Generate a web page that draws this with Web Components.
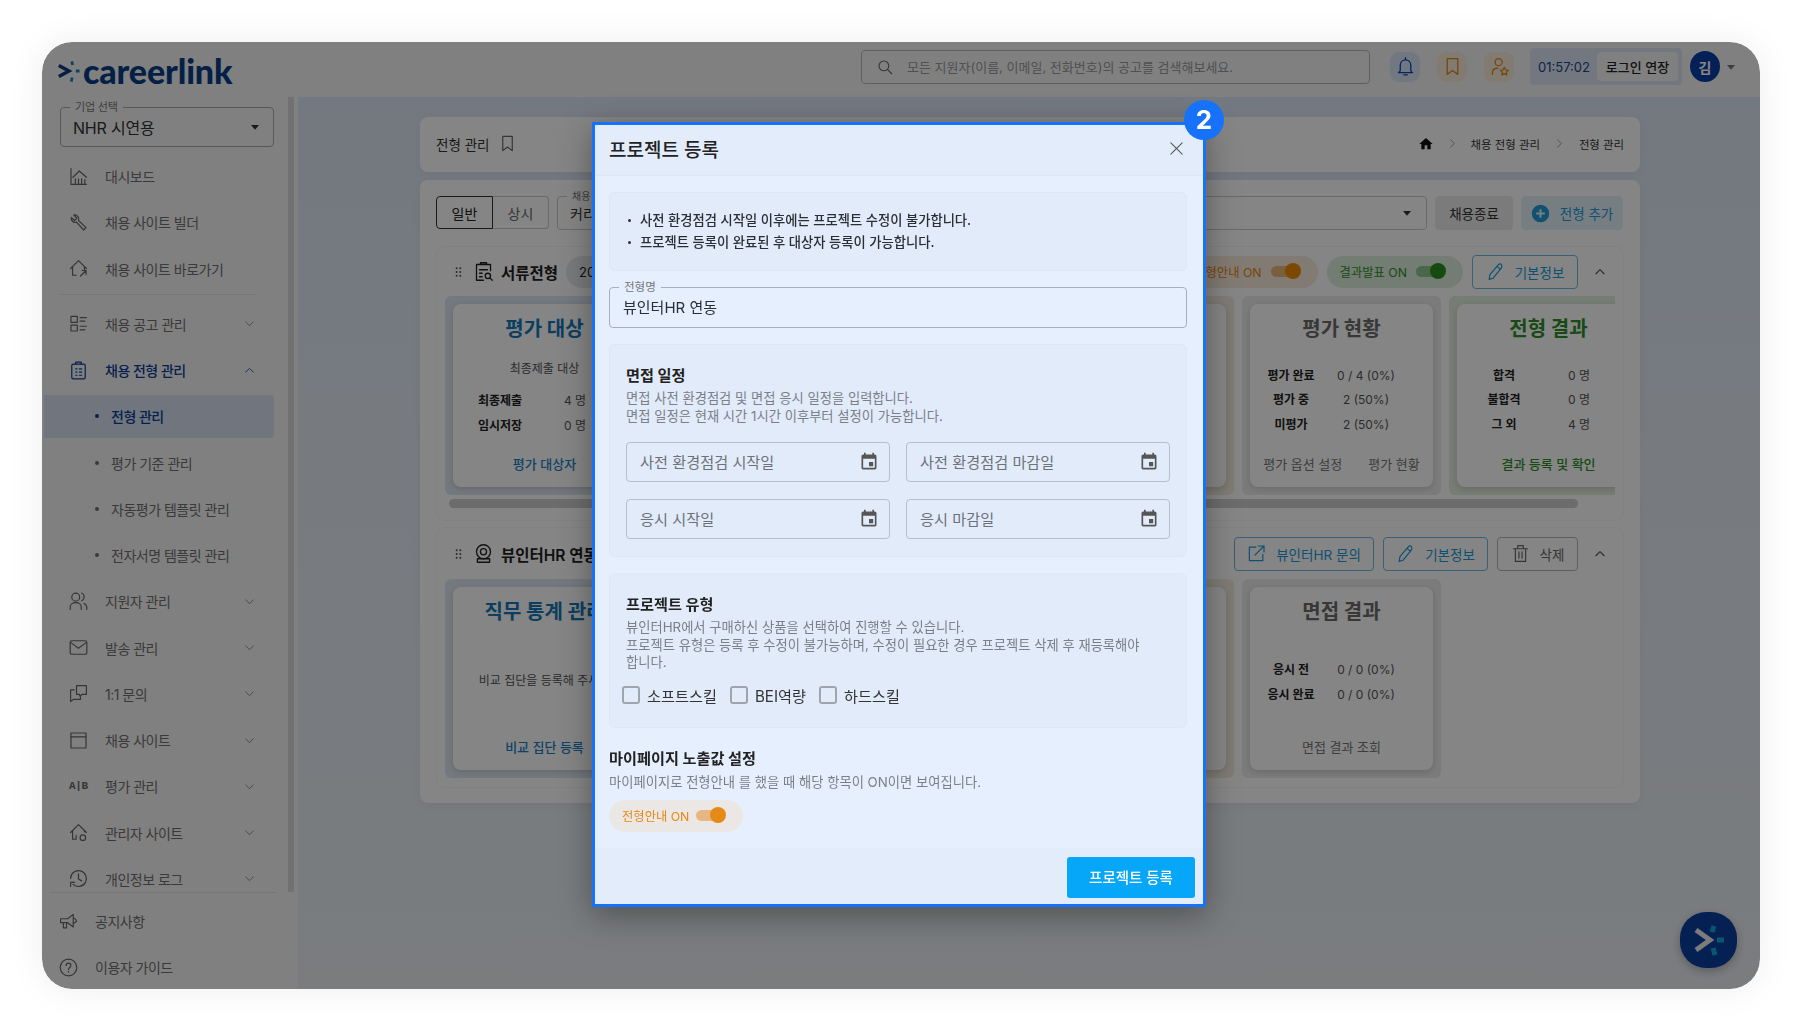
<!DOCTYPE html>
<html lang="ko"><head><meta charset="utf-8"><title>프로젝트 등록</title>
<style>
html,body{margin:0;height:100%;background:#fff}
body{font-family:Inter,"Noto Sans CJK KR",sans-serif;color:#222;overflow:hidden}
</style></head><body>
<app-frame>
  <top-bar slot="top"></top-bar>
  <side-bar slot="side"></side-bar>
  <main-area slot="main"></main-area>
  <project-dialog slot="dialog"></project-dialog>
</app-frame>
<script>
const ICONS={
 dash:'<path d="M2.500 2v20h19.500M8 21v-6M12 21v-6M16 21v-6M20 21v-5M5 13l8-8 9 8"/>',
 wrench:'<path d="M6 2.500 10 6.500 7 9.500 3 5.500C2 9 5.500 13 9.500 11.500l9 10 3-3-9.500-9C13.500 5.500 10 1.500 6 2.500z"/>',
 homego:'<path d="M2 12 12 2l10 10M4.500 10v10.500H9M19.500 10v3M14.500 21.500l7-7M16.500 14.500h5v5"/>',
 list:'<rect x="2.500" y="3" width="8" height="7.500"/><rect x="2.500" y="14" width="8" height="7.500"/><path d="M14 4.500h8M14 9h6M14 15.500h8M14 20h6"/>',
 clip:'<rect x="3.500" y="4" width="17" height="18.500" rx="2"/><path d="M8.500 4V1.500h7V4M8.500 10h1.500M13 10h3M8.500 14h1.500M13 14h3M8.500 18h1.500M13 18h3"/>',
 people:'<circle cx="8.500" cy="6.500" r="5"/><path d="M1.500 22v-3c0-3 3-5.500 7-5.500s7 2.500 7 5.500v3M16 1.500c2.500 1 3.500 3 3 5.500s-2 3.500-3 4M19 14.500c2 1 3.500 3 3.500 5v2.500"/>',
 mail:'<rect x="1.500" y="3.500" width="21" height="17" rx="2"/><path d="m2 5.500 10 7.500 10-7.500"/>',
 chat:'<path d="M9.500 2H22v11h-5.500L14 15.500l-1-2.500H9.500zM6.500 7.500H2V22l3.500-2.500h9v-3"/>',
 win:'<rect x="2.500" y="2.500" width="19" height="19"/><path d="M2.500 7.500h19"/>',
 homecog:'<path d="M2 12 12 2l10 10M4.500 10v10.500H9v-5M19.500 10v1"/><circle cx="17.500" cy="18.500" r="3.500"/>',
 hist:'<path d="M2 12a10 10 0 1 1 3.200 7.400M2 22v-5h5M12 6v6.500l4 2.500"/>',
 mega:'<path d="M2 8.500h9l7-5.500v16l-7-5.500H2zM5.500 14v6h4v-6M18 7.500c2.500 1 4 2.300 4 3.500s-1.500 2.500-4 3.500"/>',
 help:'<circle cx="12" cy="12" r="10.500"/><path d="M9 9.500C9 7.500 10.500 6.500 12 6.500s3 1 3 3c0 2.500-3 2.500-3 5M12 17v1"/>',
 bell:'<path d="M6 17V10.500C6 7 8.500 4.500 12 4.500s6 2.500 6 6V17l2 2H4zM10 21.500h4M12 2v2"/>',
 mark:'<path d="M6 3h12v18l-6-4.500L6 21z"/>',
 userstar:'<circle cx="11" cy="7" r="4"/><path d="M4 21v-2c0-3 2-5 6-5"/><path d="m17.500 13 1.400 2.800 3.100.4-2.200 2.200.5 3.100-2.800-1.400-2.800 1.400.5-3.100-2.200-2.200 3.100-.4z"/>',
 search:'<circle cx="10.500" cy="10.500" r="6.500"/><path d="m15.500 15.500 5.500 5.500"/>',
 down:'<path d="m5 9 7 7 7-7"/>',
 up:'<path d="m5 15 7-7 7 7"/>',
 right:'<path d="m8 4 8 8-8 8"/>',
 x:'<path d="M4 4l16 16M20 4 4 20"/>',
 pencil:'<path d="M15.500 3.500c1-1.500 3-1.500 4 0s1 2.500 0 4L9 20.500l-5 1.500L5 16zM14 5.500l4 3.500"/>',
 ext:'<path d="M11 4H3v17h17v-8M14 2.500h7.500V10M21.500 2.500 10 14"/>',
 trash:'<path d="M3 6h18M5.500 6v16h13V6M8.500 6V2h7v4M10 10v8M14 10v8"/>',
 doc:'<path d="M8.500 4H4v18h8M15.500 4H20v7M8.500 4V2h7v2zM7.500 10h9M7.500 14h3M7.500 18h3"/><circle cx="17" cy="17" r="3"/><path d="m19 19 3 3"/>',
 cam:'<circle cx="12" cy="10" r="8"/><circle cx="12" cy="10" r="3.500"/><path d="M5 22h14v-4H5z"/>'
};
const FILLS={
 event:'<path d="M17 12h-5v5h5v-5zM16 1v2H8V1H6v2H5c-1.110 0-1.990.9-1.990 2L3 19c0 1.100.89 2 2 2h14c1.100 0 2-.9 2-2V5c0-1.100-.9-2-2-2h-1V1h-2zm3 18H5V8h14v11z"/>',
 home:'<path d="M10 20v-6h4v6h5v-8h3L12 3 2 12h3v8z"/>',
 caret:'<path d="M6 9h12l-6 7z"/>',
 plus:'<path d="M12 1a11 11 0 1 0 0 22 11 11 0 0 0 0-22zm1.300 5.500v4.200h4.200v2.600h-4.200v4.200h-2.600v-4.200H6.500v-2.600h4.200V6.500z"/>',
 dots:'<circle cx="8" cy="4" r="2.200"/><circle cx="16" cy="4" r="2.200"/><circle cx="8" cy="12" r="2.200"/><circle cx="16" cy="12" r="2.200"/><circle cx="8" cy="20" r="2.200"/><circle cx="16" cy="20" r="2.200"/>'
};
function def(name,css,html){
 customElements.define(name,class extends HTMLElement{
  connectedCallback(){
   if(this.shadowRoot)return;
   const r=this.attachShadow({mode:'open'});
   const a=n=>this.getAttribute(n)||'';
   r.innerHTML='<style>'+css+'</style>'+(typeof html==='function'?html(a):html);
  }
 });
}
def('x-icon',':host{display:inline-flex;width:var(--s,18px);height:var(--s,18px);flex:none}svg{width:100%;height:100%;display:block}',
 a=>{const n=a('name');const f=FILLS[n];return `<svg viewBox="0 0 24 24" fill="${f?'currentColor':'none'}" stroke="${f?'none':'currentColor'}" stroke-width="${a('w')||1.5}" stroke-linecap="round" stroke-linejoin="round">${f||ICONS[n]}</svg>`});
def('x-logo',':host{display:inline-flex;align-items:center;gap:3px;color:#0b3f86;margin-top:8px}svg{width:23px;height:26px;display:block}span{font:900 34px/1 Lato,Inter,sans-serif;letter-spacing:-.15px}',
 `<svg viewBox="0 0 25 26"><path d="M2 7 13 13 2 19" fill="none" stroke="#0b3f86" stroke-width="3.800"/><path d="M16 2.500l1 4M20.500 13h4M16.500 20l-1 4.500" stroke="#0d86b8" stroke-width="3"/></svg><span>careerlink</span>`);
def('top-bar',`:host{display:flex;align-items:center;height:55px;background:#f6f6f6;padding:0 0 6px 15px;box-sizing:border-box}
 .sp{flex:1}.search{width:509px;height:34px;box-sizing:border-box;border:1px solid #b6b6b6;border-radius:4px;display:flex;align-items:center;gap:13px;padding-left:14px;color:#999;font-size:13px;margin-right:20px;--s:18px}
 .search x-icon{color:#666}
 .ib{width:30px;height:30px;border-radius:9px;display:grid;place-items:center;margin-right:17px;--s:21px}
 .ib.b{background:#dbe6f7;color:#0c47b8}.ib.o{background:#f8ebd9;color:#dd8a1e}
 .timer{width:152px;height:37px;background:#dce6f5;border-radius:4px;display:flex;align-items:center;box-sizing:border-box;padding:0 4px 0 8px;justify-content:space-between;margin-left:-1px;font-size:13px;color:#17458c}
 .timer b{font-weight:500;background:#f6f6f6;color:#222;width:81px;height:29px;border-radius:4px;display:grid;place-items:center;font-size:13px}
 .av{width:30px;height:31px;border-radius:50%;background:#0a3fa8;color:#fff;display:grid;place-items:center;font-size:14px;font-weight:600;margin-left:8px}
 .ca{color:#777;--s:16px;margin:0 21px 0 3px}`,
 `<x-logo></x-logo><div class="sp"></div>
 <div class="search"><x-icon name="search"></x-icon><span>모든 지원자(이름, 이메일, 전화번호)의 공고를 검색해보세요.</span></div>
 <div class="ib b"><x-icon name="bell"></x-icon></div><div class="ib o"><x-icon name="mark"></x-icon></div><div class="ib o"><x-icon name="userstar"></x-icon></div>
 <div class="timer"><span>01:57:02</span><b>로그인 연장</b></div><div class="av">김</div><x-icon class="ca" name="caret"></x-icon>`);
def('nav-row',`:host{display:flex;align-items:center;height:46.250px;width:231.500px;box-sizing:border-box;font-size:14px;letter-spacing:-.5px;color:#707070;position:relative;flex:none}
 .ic{width:63px;padding-left:27px;box-sizing:border-box;display:flex;--s:19px;color:#666;flex:none}
 .t{flex:1;white-space:nowrap}
 .ch{--s:13px;margin-right:18px;color:#777}
 .ab{font:700 11px/19px "Liberation Mono",monospace;letter-spacing:-.4px}
 :host([active]){color:#0d3f96;font-weight:500}:host([active]) .ic,:host([active]) .ch{color:#0d3f96}
 :host([sub]){padding-left:53px}:host([sub]) .t{padding-left:16px;position:relative}
 :host([sub]) .t::before{content:"";position:absolute;left:0;top:8px;width:4px;height:4px;border-radius:50%;background:currentColor}
 :host([foot]) .ic{padding-left:17px;width:53px}
 :host([sel]){color:#0d3f96;font-weight:500}
 :host([sel])::before{content:"";position:absolute;left:2px;right:0;top:2px;bottom:2px;background:#d7e1f1;border-radius:0 4px 4px 0;z-index:-1}`,
 a=>{const ic=a('icon');
  return `${ic?`<div class="ic">${ic==='ab'?'<span class="ab">A|B</span>':`<x-icon name="${ic}"></x-icon>`}</div>`:''}<div class="t"><slot></slot></div>${a('chev')?`<x-icon class="ch" name="${a('chev')}"></x-icon>`:''}`});
def('side-bar',`:host{display:flex;flex-direction:column;width:256px;height:100%;background:#f6f6f6;position:relative;isolation:isolate}
 .scroll{flex:1;min-height:0;overflow:hidden;padding-top:10px;position:relative}
 .bar{position:absolute;left:246px;top:0;bottom:0;width:6px;background:#d8d8d8}
 .sel{margin:0 0 6px 18px;width:214px;height:40px;box-sizing:border-box;border:1px solid #a9a9a9;border-radius:4px;display:flex;align-items:center;justify-content:space-between;padding:0 10px 0 12px;font-size:16px;letter-spacing:-.2px;color:#333;position:relative;--s:16px}
 .sel i{position:absolute;left:9px;top:-8px;font:normal 11px/14px Inter,"Noto Sans CJK KR",sans-serif;color:#777;background:#f6f6f6;padding:0 5px}
 hr{margin:2px 0 6px 18px;width:196px;border:0;border-top:1px solid #e4e4e4}
 .foot{height:97px;box-sizing:border-box;margin:0;padding-top:6px;position:relative}
 .foot::before{content:"";position:absolute;left:8px;right:22px;top:0;border-top:1px solid #e2e2e2}`,
 `<div class="scroll"><div class="bar"></div>
 <div class="sel"><i>기업 선택</i><span>NHR 시연용</span><x-icon name="caret"></x-icon></div>
 <nav-row icon="dash">대시보드</nav-row><nav-row icon="wrench">채용 사이트 빌더</nav-row><nav-row icon="homego">채용 사이트 바로가기</nav-row><hr>
 <nav-row icon="list" chev="down">채용 공고 관리</nav-row><nav-row icon="clip" chev="up" active>채용 전형 관리</nav-row>
 <nav-row sub sel>전형 관리</nav-row><nav-row sub>평가 기준 관리</nav-row><nav-row sub>자동평가 템플릿 관리</nav-row><nav-row sub>전자서명 템플릿 관리</nav-row>
 <nav-row icon="people" chev="down">지원자 관리</nav-row><nav-row icon="mail" chev="down">발송 관리</nav-row><nav-row icon="chat" chev="down">1:1 문의</nav-row><nav-row icon="win" chev="down">채용 사이트</nav-row><nav-row icon="ab" chev="down">평가 관리</nav-row><nav-row icon="homecog" chev="down">관리자 사이트</nav-row><nav-row icon="hist" chev="down">개인정보 로그</nav-row></div>
 <div class="foot"><nav-row icon="mega" foot>공지사항</nav-row><nav-row icon="help" foot>이용자 가이드</nav-row></div>`);
def('x-switch',`:host{display:inline-flex;align-items:center;border-radius:16px;height:32px;box-sizing:border-box;font-size:12.300px;white-space:nowrap;padding:0 var(--pr,18px) 0 13px;gap:9px;color:var(--c);background:var(--bg)}
 .tr{width:29px;height:11px;border-radius:6px;background:var(--tr);position:relative;flex:none}
 .tr::after{content:"";position:absolute;right:-1px;top:-3px;width:16px;height:16px;border-radius:50%;background:var(--k)}`,
 `<slot></slot><span class="tr"></span>`);
def('x-btn',`:host{display:inline-flex;align-items:center;justify-content:center;gap:10px;box-sizing:border-box;height:var(--h,34px);border:1px solid var(--bc,#6db9e2);border-radius:4px;color:var(--c,#1a9ad8);background:var(--b,transparent);font-size:13.500px;white-space:nowrap;--s:19px}`,
 a=>`${a('icon')?`<x-icon name="${a('icon')}"></x-icon>`:''}<slot></slot>`);
def('stat-row',`:host{display:grid;grid-template-columns:75px 75px;font-size:12px;height:24.500px;line-height:24.500px;text-align:center;color:#555}b{font-weight:700;color:#222}`,
 a=>`<b>${a('k')}</b><span>${a('v')}</span>`);
def('stat-panel',`:host{display:block;flex:none;width:var(--w,199px);height:199px;box-sizing:border-box;padding:8px;background:var(--p);border-radius:6px}
 .card{background:#fff;height:183px;border-radius:8px;box-shadow:0 2px 6px rgba(0,0,0,.14);display:flex;flex-direction:column}
 h3{margin:0;font-size:20px;font-weight:700;text-align:center;color:var(--t);line-height:32px;padding-top:9px;height:32px;white-space:nowrap;overflow:visible}
 .body{flex:1;margin-top:11px;display:flex;flex-direction:column;justify-content:center;padding-left:var(--shift,3.500px);padding-top:var(--bp,0);min-height:0}
 .foot{height:44px;display:flex;justify-content:center;gap:var(--fg,0);align-items:center;font-size:13px;color:var(--l);font-weight:var(--lw,500);padding-bottom:3px;box-sizing:border-box}`,
 a=>`<div class="card">${a('title')?`<h3>${a('title')}</h3>`:'<h3></h3>'}<div class="body"><slot></slot></div><div class="foot"><slot name="foot"></slot></div></div>`);
def('flow-section',`:host{display:block;background:#fff;border-radius:8px;box-shadow:0 0 0 1px #f6f7f9;padding:0 8px 9px;box-sizing:border-box}
 .hd{height:var(--hh,49px);display:flex;align-items:center;padding:0 0 0 8px;gap:0}
 .dots{--s:11px;color:#555;margin-right:9px;height:16px}
 .ic{--s:21px;color:#222;margin-right:7px}
 .tt{font-size:15.500px;font-weight:600;white-space:nowrap;color:#222}
 .sp{flex:1}
 ::slotted([slot=right]){display:flex;align-items:center;gap:9px}
 .col{--s:14px;color:#555;margin:0 8px 0 15px}`,
 a=>`<div class="hd"><x-icon class="dots" name="dots"></x-icon><x-icon class="ic" name="${a('icon')}"></x-icon><span class="tt">${a('title')}</span><slot name="chip"></slot><span class="sp"></span><slot name="right"></slot><x-icon class="col" name="up" w="2"></x-icon></div><slot></slot>`);
def('main-area',`:host{display:block;height:100%;position:relative;background:linear-gradient(180deg,#dde8f6 0,#e4ebf5 300px,#eaedf2 100%);padding:20px 120px 0 122px;box-sizing:border-box;overflow:hidden}
 .crumb{height:55px;background:#fff;border-radius:8px;display:flex;align-items:center;padding:0 16px 2px;box-sizing:border-box;font-size:13.500px;color:#333;box-shadow:0 2px 8px rgba(90,110,140,.08)}
 .crumb .bm{--s:19px;margin-left:9px;color:#666}.sp{flex:1}
 .cr{font-size:11.400px;display:flex;align-items:center;color:#333}.cr x-icon.h{--s:16px;color:#111}.cr x-icon.g{--s:11px;color:#777;margin:0 13px}
 .box{margin-top:8px;height:623px;background:#fff;border-radius:8px;padding:16px 17px 16px 16px;box-sizing:border-box;box-shadow:0 2px 8px rgba(90,110,140,.08)}
 .tools{display:flex;height:34px;margin-bottom:17px;align-items:stretch}
 .tabs{display:flex;width:113px;height:33px;font-size:14px;color:#666;margin-right:8px}
 .tabs span{flex:1;display:grid;place-items:center;border:1px solid #c9c9c9}
 .tabs .on{border-color:#333;color:#222;border-radius:4px 0 0 4px}.tabs .off{border-left:0;border-radius:0 4px 4px 0}
 .sel{flex:1;border:1px solid #c9c9c9;border-radius:4px;position:relative;display:flex;align-items:center;justify-content:space-between;padding:0 11px 0 12px;font-size:14px;--s:16px;color:#333;margin-right:8px}
 .sel i{position:absolute;left:9px;top:-7px;font:normal 10px/12px Inter,"Noto Sans CJK KR",sans-serif;color:#777;background:#fff;padding:0 5px}
 .sec{margin:0 0 8px 1px}
 .sec2{--hh:51px}
 .strip{display:flex;gap:8px;overflow:hidden;height:199px}
 .track{height:9px;margin:4px 37px 3px 4px;background:#cfcfcf;border-radius:5px}
 .chip{margin-left:8px;background:#e9eaec;border-radius:16px;height:32px;line-height:32px;padding:0 13px;font-size:13px;white-space:nowrap}
 .blue{--p:#dfe8f3;--t:#1877b8;--l:#1e80c4}.gray{--p:#ececec;--t:#6c6c6c;--l:#787878;--lw:400}.green{--p:#e3efdf;--t:#2f8f2a;--l:#2f8f2a}.orange{--p:#f3ecdf;--t:#d9861a;--l:#d9861a}
 .sub{font-size:12px;text-align:center;color:#555;line-height:25px;margin-left:-9.500px;padding-bottom:8px}
 .msg{font-size:12px;color:#555;text-align:center;margin-left:-3.500px;white-space:nowrap;padding-bottom:6px}
 .fab{position:absolute;left:1382px;top:815px;width:57px;height:56px;border-radius:46%;background:#0a3f9e;box-shadow:0 3px 8px rgba(0,0,0,.25);display:grid;place-items:center}
 .fab svg{width:40px;height:40px}
 .orangeSw{--c:#e8870f;--bg:#f7ebdc;--tr:#eab67a;--k:#ee8a05}.greenSw{--c:#2f8f2a;--bg:#dff0dc;--tr:#8fc58c;--k:#2c8f22}
 .c0{--bc:#b5b5b5;--c:#666}`,
 `<div class="crumb"><span>전형 관리</span><x-icon class="bm" name="mark"></x-icon><span class="sp"></span>
  <div class="cr"><x-icon class="h" name="home"></x-icon><x-icon class="g" name="right"></x-icon><span>채용 전형 관리</span><x-icon class="g" name="right" style="margin:0 14px"></x-icon><span>전형 관리</span></div></div>
 <div class="box">
  <div class="tools"><div class="tabs"><span class="on">일반</span><span class="off">상시</span></div>
   <div class="sel"><i>채용</i><span>커리어</span><x-icon name="caret"></x-icon></div>
   <x-btn style="--bc:#ececec;--b:#ececec;--c:#333;width:78px;margin-right:8px">채용종료</x-btn>
   <x-btn icon="plus" style="--bc:#e3f1f9;--b:#e3f1f9;--c:#1f9ad9;width:102px">전형 추가</x-btn></div>
  <flow-section class="sec" icon="doc" title="서류전형" style="height:273px">
   <span class="chip" slot="chip">2025</span>
   <div slot="right"><x-switch class="orangeSw">전형안내 ON</x-switch><x-switch class="greenSw">결과발표 ON</x-switch><x-btn icon="pencil" style="width:106px">기본정보</x-btn></div>
   <div class="strip">
    <stat-panel class="blue" title="평가 대상" style="--shift:9.500px"><div class="sub">최종제출 대상</div><stat-row k="최종제출" v="4 명"></stat-row><stat-row k="임시저장" v="0 명" style="margin-bottom:5px"></stat-row><span slot="foot">평가 대상자</span></stat-panel>
    <stat-panel class="gray"></stat-panel><stat-panel class="gray"></stat-panel>
    <stat-panel class="orange" style="--w:168px"></stat-panel>
    <stat-panel class="gray" title="평가 현황" style="--fg:26px;--bp:2px"><stat-row k="평가 완료" v="0 / 4 (0%)"></stat-row><stat-row k="평가 중" v="2 (50%)"></stat-row><stat-row k="미평가" v="2 (50%)"></stat-row><span slot="foot">평가 옵션 설정</span><span slot="foot">평가 현황</span></stat-panel>
    <stat-panel class="green" title="전형 결과" style="--shift:9.500px;--bp:2px"><stat-row k="합격" v="0 명"></stat-row><stat-row k="불합격" v="0 명"></stat-row><stat-row k="그 외" v="4 명"></stat-row><span slot="foot">결과 등록 및 확인</span></stat-panel>
   </div><div class="track"></div>
  </flow-section>
  <flow-section class="sec sec2" icon="cam" title="뷰인터HR 연동" style="height:259px;margin-bottom:0">
   <div slot="right"><x-btn icon="ext" style="width:140px">뷰인터HR 문의</x-btn><x-btn icon="pencil" style="width:105px">기본정보</x-btn><x-btn class="c0" icon="trash" style="width:81px">삭제</x-btn></div>
   <div class="strip">
    <stat-panel class="blue" title="직무 통계 관리"><div class="msg">비교 집단을 등록해 주세요</div><span slot="foot">비교 집단 등록</span></stat-panel>
    <stat-panel class="gray"></stat-panel><stat-panel class="gray"></stat-panel>
    <stat-panel class="orange" style="--w:168px"></stat-panel>
    <stat-panel class="gray" title="면접 결과"><stat-row k="응시 전" v="0 / 0 (0%)"></stat-row><stat-row k="응시 완료" v="0 / 0 (0%)"></stat-row><span slot="foot">면접 결과 조회</span></stat-panel>
   </div>
  </flow-section>
 </div>
 <div class="fab"><svg viewBox="0 0 40 40"><path d="M7 10l14 10L7 30" fill="none" stroke="#eee" stroke-width="5"/><path d="M25 6l-2 6M35 20h-7M24 28l2 7" stroke="#12a6d8" stroke-width="5"/></svg></div>`);
def('date-field',`:host{display:flex;align-items:center;justify-content:space-between;height:40px;box-sizing:border-box;border:1px solid #b9bfc9;border-radius:4px;padding:0 10px 2px 13px;font-size:15.200px;color:#6d7178;--s:20px}x-icon{color:#555;margin-top:2px}`,
 a=>`<span>${a('ph')}</span><x-icon name="event"></x-icon>`);
def('x-check',`:host{display:inline-flex;align-items:center;gap:7px;font-size:15.200px;color:#333}i{width:18px;height:18px;box-sizing:border-box;border:2px solid #9fa5ad;border-radius:3px;flex:none}`,
 `<i></i><slot></slot>`);
def('form-card',`:host{display:block;background:#e2ebfa;border:1px solid #dfe7f5;border-radius:6px;box-sizing:border-box;flex:none}`,`<slot></slot>`);
def('project-dialog',`:host{display:flex;flex-direction:column;position:absolute;left:550px;top:80px;width:614px;height:785px;box-sizing:border-box;background:#e6effe;border:3px solid #1672fa;box-shadow:0 8px 30px rgba(0,0,0,.35);color:#222;z-index:5}
 .badge{position:absolute;right:-21px;top:-25px;width:40px;height:40px;border-radius:50%;background:#1672fa;color:#fff;font:700 26px/40px Inter,"Noto Sans CJK KR",sans-serif;text-align:center}
 header{height:51px;flex:none;display:flex;align-items:center;justify-content:space-between;padding:0 18px 4px 14px;border-bottom:1px solid #dde6f4;box-sizing:border-box;background:#e3ecfb}
 h2{margin:0;font-size:19px;font-weight:500}
 header x-icon{--s:17px;color:#555}
 .body{flex:1;min-height:0;display:flex;flex-direction:column;gap:16px;padding:16px 16px 0 14px}
 .note{height:75px;display:flex;flex-direction:column;justify-content:center;padding-left:18px;font-size:13.300px;font-weight:500;line-height:22px;color:#2a2e35}
 .note div{position:relative;padding-left:12px}.note div::before{content:"";position:absolute;left:0;top:10px;width:3px;height:3px;border-radius:50%;background:#333}
 .name{height:41px;flex:none;box-sizing:border-box;border:1px solid #a9afb9;border-radius:4px;position:relative;display:flex;align-items:center;padding:0 0 2px 13px;font-size:15px;color:#2a2e35}
 .name i{position:absolute;left:9px;top:-8px;font:normal 11.500px/14px Inter,"Noto Sans CJK KR",sans-serif;color:#777;background:#e6effe;padding:0 5px}
 .sec{padding:21px 16px 0 16px}
 .sec h4,.my h4{margin:0;font-size:15.200px;font-weight:700;line-height:20px;color:#222}
 .sec p,.my p{margin:4px 0 0;font-size:13.300px;line-height:17.500px;color:#7b8088;white-space:nowrap}
 .dates{display:grid;grid-template-columns:264px 264px;column-gap:16px;row-gap:17px;margin-top:17px}
 .checks{display:flex;gap:13px;margin:12px 0 0 -4px}
 .my h4{margin-top:4px}.my{margin-top:1px}
 .my p{margin-top:5px}
 .my x-switch{margin-top:8px;--c:#e8870f;--bg:#ebe7e5;--tr:#e7b782;--k:#e68a17;--pr:14px;width:134px;height:32px;box-sizing:border-box;gap:7px;display:flex}
 footer{height:56px;flex:none;background:#e3ecfb;display:flex;justify-content:flex-end;padding:9px 8px 0 0;box-sizing:border-box}
 footer button{all:unset;width:128px;height:41px;background:#06a6f9;color:#fff;border-radius:3px;font-size:14.500px;font-weight:500;text-align:center;line-height:41px;font-family:inherit}`,
 `<div class="badge">2</div>
 <header><h2>프로젝트 등록</h2><x-icon name="x"></x-icon></header>
 <div class="body">
  <form-card style="height:79px"><div class="note"><div>사전 환경점검 시작일 이후에는 프로젝트 수정이 불가합니다.</div><div>프로젝트 등록이 완료된 후 대상자 등록이 가능합니다.</div></div></form-card>
  <div class="name"><i>전형명</i>뷰인터HR 연동</div>
  <form-card style="height:213px"><div class="sec"><h4>면접 일정</h4><p>면접 사전 환경점검 및 면접 응시 일정을 입력합니다.<br>면접 일정은 현재 시간 1시간 이후부터 설정이 가능합니다.</p>
   <div class="dates"><date-field ph="사전 환경점검 시작일"></date-field><date-field ph="사전 환경점검 마감일"></date-field><date-field ph="응시 시작일"></date-field><date-field ph="응시 마감일"></date-field></div></div></form-card>
  <form-card style="height:155px"><div class="sec"><h4>프로젝트 유형</h4><p>뷰인터HR에서 구매하신 상품을 선택하여 진행할 수 있습니다.<br>프로젝트 유형은 등록 후 수정이 불가능하며, 수정이 필요한 경우 프로젝트 삭제 후 재등록해야<br>합니다.</p>
   <div class="checks"><x-check>소프트스킬</x-check><x-check>BEI역량</x-check><x-check>하드스킬</x-check></div></div></form-card>
  <div class="my"><h4>마이페이지 노출값 설정</h4><p>마이페이지로 전형안내 를 했을 때 해당 항목이 ON이면 보여집니다.</p><x-switch>전형안내 ON</x-switch></div>
 </div>
 <footer><button>프로젝트 등록</button></footer>`);
def('app-frame',`:host{display:block;position:absolute;left:42px;top:42px;width:1718px;height:947px;border-radius:30px;box-shadow:0 0 36px rgba(0,0,0,.07)}
 .w{width:100%;height:100%;border-radius:30px;overflow:hidden;display:grid;grid-template-columns:256px minmax(0,1fr);grid-template-rows:55px minmax(0,1fr);position:relative}
 .t{grid-column:1/3;min-width:0}.s,.m{min-height:0;min-width:0}
 .ov{position:absolute;inset:0;background:rgba(0,0,0,.48);backdrop-filter:blur(.5px);z-index:4}`,
 `<div class="w"><div class="t"><slot name="top"></slot></div><div class="s"><slot name="side"></slot></div><div class="m"><slot name="main"></slot></div><div class="ov"></div><slot name="dialog"></slot></div>`);
</script>
</body></html>
